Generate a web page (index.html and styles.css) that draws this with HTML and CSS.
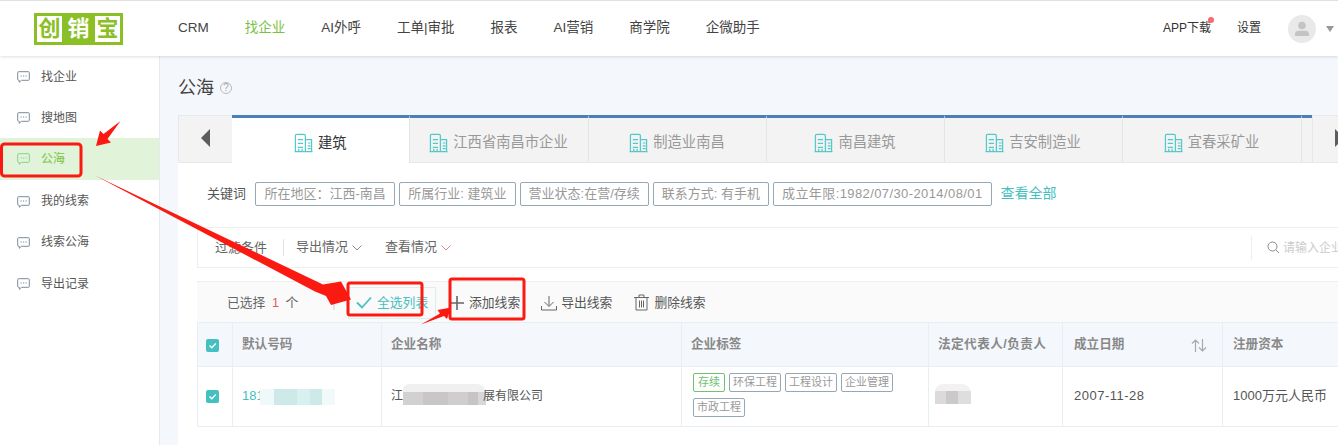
FILE: index.html
```html
<!DOCTYPE html>
<html lang="zh">
<head>
<meta charset="utf-8">
<title>公海</title>
<link rel="stylesheet" href="styles.css">
</head>
<body>
<svg class="defs" width="0" height="0">
  <symbol id="bld" viewBox="0 0 20 20"><path d="M1.500 19V2.500q0-1.500 1.500-1.500h7.500q1.500 0 1.500 1.500V19M.5 19h19M12 6.500h6.500V19M4 6.500h5.500M4 10.500h5.500M4 14.500h5.500M5 19v-3M8.500 19v-3M14.500 10h3M14.500 13h3M14.500 16h3" fill="none" stroke="#55c9c9" stroke-width="1.300"/></symbol>
  <symbol id="msg" viewBox="0 0 13 12"><path d="M1.500.7h10q.8 0 .8.8v7q0 .8-.8.8H4.500L2.300 11.300V9.300H1.500q-.8 0-.8-.8v-7q0-.8.8-.8z" fill="none" stroke="currentColor" stroke-width="1"/><path d="M3.500 5h1.200M6 5h1.200M8.500 5h1.200" stroke="currentColor" stroke-width="1.200"/></symbol>
  <symbol id="chev" viewBox="0 0 10 6"><path d="M.5.500 5 5l4.500-4.500" fill="none" stroke="currentColor" stroke-width="1"/></symbol>
  <symbol id="chk" viewBox="0 0 13 13"><rect width="13" height="13" rx="2" fill="#45c0c0"/><path d="M3.500 6.500 5.800 8.700 9.800 4.600" fill="none" stroke="#fff" stroke-width="1.400"/></symbol>
</svg>
<header class="topbar">
  <div class="logo"><span class="lg lg-w">创</span><span class="lg lg-g">销</span><span class="lg lg-w">宝</span></div>
  <nav class="nav">
    <a>CRM</a><a class="on">找企业</a><a>AI外呼</a><a>工单|审批</a><a>报表</a><a>AI营销</a><a>商学院</a><a>企微助手</a>
  </nav>
  <div class="top-right">
    <span class="app">APP下载<i class="dot"></i></span>
    <span class="set">设置</span>
    <span class="avatar"><svg width="14" height="15" viewBox="0 0 14 15"><circle cx="7" cy="4.500" r="3.800" fill="#c4c4c4"/><path d="M0 15v-2.500q0-2 3-2.800h8q3 .8 3 2.800V15z" fill="#c4c4c4"/></svg></span>
    <i class="caret"></i>
  </div>
</header>
<div class="body">
  <aside class="side">
    <a class="si"><svg class="si-ic"><use href="#msg"/></svg>找企业</a>
    <a class="si"><svg class="si-ic"><use href="#msg"/></svg>搜地图</a>
    <a class="si active"><svg class="si-ic"><use href="#msg"/></svg>公海</a>
    <a class="si low"><svg class="si-ic"><use href="#msg"/></svg>我的线索</a>
    <a class="si low"><svg class="si-ic"><use href="#msg"/></svg>线索公海</a>
    <a class="si low"><svg class="si-ic"><use href="#msg"/></svg>导出记录</a>
  </aside>
  <main class="main">
    <div class="title">公海<span class="help">?</span></div>
    <div class="tabs">
      <div class="tab-arrow left"><i class="tri-l"></i></div>
      <div class="tab active w177"><svg class="bld"><use href="#bld"/></svg>建筑</div>
      <div class="tab w179"><svg class="bld"><use href="#bld"/></svg>江西省南昌市企业</div>
      <div class="tab w178"><svg class="bld"><use href="#bld"/></svg>制造业南昌</div>
      <div class="tab w178"><svg class="bld"><use href="#bld"/></svg>南昌建筑</div>
      <div class="tab w178"><svg class="bld"><use href="#bld"/></svg>吉安制造业</div>
      <div class="tab w179"><svg class="bld"><use href="#bld"/></svg>宜春采矿业</div>
      <div class="tab w11"></div>
      <div class="tab-arrow right"><i class="tri-r"></i></div>
    </div>
    <section class="card">
      <div class="kw">
        <span class="kw-label">关键词</span>
        <span class="kw-tag">所在地区：江西-南昌</span>
        <span class="kw-tag">所属行业: 建筑业</span>
        <span class="kw-tag">营业状态:在营/存续</span>
        <span class="kw-tag">联系方式: 有手机</span>
        <span class="kw-tag ls3">成立年限:1982/07/30-2014/08/01</span>
        <a class="kw-all">查看全部</a>
      </div>
      <div class="filter">
        <span class="f-first">过滤条件</span>
        <span class="f-item">导出情况<svg class="chev"><use href="#chev"/></svg></span>
        <span class="f-item">查看情况<svg class="chev red"><use href="#chev"/></svg></span>
        <span class="search">
          <svg width="13" height="13" viewBox="0 0 13 13"><circle cx="5.500" cy="5.500" r="4.500" fill="none" stroke="#888" stroke-width="1"/><path d="M9 9l3 3" stroke="#888" stroke-width="1"/></svg>
          请输入企业名称
        </span>
      </div>
      <div class="actions">
        <span class="sel">已选择<b>1</b>个</span>
        <span class="sel-div"></span>
        <span class="all"><svg width="16" height="13" viewBox="0 0 16 13"><path d="M1 6.500 6 11.500 15 1.500" fill="none" stroke="#45c0c0" stroke-width="1.800"/></svg><u>全选列表</u></span>
        <span class="act add"><svg width="14" height="14" viewBox="0 0 14 14"><path d="M7 0v14M0 7h14" stroke="#666" stroke-width="1.600"/></svg>添加线索</span>
        <span class="act exp"><svg width="16" height="16" viewBox="0 0 16 16"><path d="M8 1v10M3.500 7 8 11.500 12.500 7M.5 11v4h15v-4" fill="none" stroke="#666" stroke-width="1"/></svg>导出线索</span>
        <span class="act del"><svg width="15" height="17" viewBox="0 0 15 17"><path d="M0 3.500h15M5 3.500V1h5v2.500M2 3.500V16h11V3.500M5.500 6.500v7M7.500 6.500v7M9.500 6.500v7" fill="none" stroke="#666" stroke-width="1"/></svg>删除线索</span>
      </div>
      <table class="grid">
        <colgroup><col class="c1"><col class="c2"><col class="c3"><col class="c4"><col class="c5"><col class="c6"><col class="c7"></colgroup>
        <thead>
          <tr>
            <th><svg class="cb"><use href="#chk"/></svg></th>
            <th>默认号码</th><th>企业名称</th><th>企业标签</th><th class="th-rep">法定代表人/负责人</th>
            <th class="col-date"><span class="th-sort">成立日期<svg width="16" height="13" viewBox="0 0 16 13"><path d="M4.500 13V1M1 4.500 4.500 1 8 4.500M11.500 0v12M8 8.500l3.500 3.500L15 8.500" fill="none" stroke="#aaa" stroke-width="1.200"/></svg></span></th>
            <th class="col-cap">注册资本</th>
          </tr>
        </thead>
        <tbody>
          <tr>
            <td><svg class="cb"><use href="#chk"/></svg></td>
            <td class="phone">181<span class="blur blur-t"></span></td>
            <td class="co">江<span class="blur blur-g"></span>展有限公司</td>
            <td class="tags-cell"><div class="tags"><span class="tg ok">存续</span><span class="tg">环保工程</span><span class="tg">工程设计</span><span class="tg">企业管理</span><span class="tg">市政工程</span></div></td>
            <td class="rep"><span class="blur blur-p"></span></td>
            <td class="col-date date">2007-11-28</td>
            <td class="col-cap">1000万元人民币</td>
          </tr>
        </tbody>
      </table>
    </section>
  </main>
</div>
<svg class="marks" width="1338" height="445" viewBox="0 0 1338 445">
  <g fill="none" stroke="#fb1a12" stroke-width="3">
    <rect x="1.500" y="144" width="79.500" height="32" rx="3"/>
    <rect x="348" y="283" width="74" height="32" rx="2"/>
    <rect x="450" y="279" width="74" height="40" rx="2"/>
  </g>
  <g fill="#fb1a12">
    <path d="M120.500 121 107.500 139 111 142.500 96 146 100 130.500 103.500 134z"/>
    <path d="M95 175.500 323 284.500 341 281.500 351 299.500 331 305 326 296 315 291.500z"/>
    <path d="M421 324.500 440 313.500 437.500 310 451 307.500 447 319 444 316z"/>
  </g>
</svg>
</body>
</html>
```
FILE: styles.css
```css
* { box-sizing: border-box; }
html, body { margin: 0; height: 445px; overflow: hidden; }
body { width: 1338px; position: relative; background: #fff; color: #555; font: 12px/1.4 "Liberation Sans", "Noto Sans CJK SC", sans-serif; }
.defs { position: absolute; }

.topbar { height: 56px; border-top: 1px solid #e1e1e1; display: flex; align-items: center; background: #fff; box-shadow: 0 1px 3px rgba(0,0,0,.13); position: relative; z-index: 2; }
.logo { width: 89px; height: 32px; margin: 0 55px 0 34px; padding: 3px 3px; background: #8abf25; display: flex; gap: 4px; flex: none; }
.lg { flex: 1; display: flex; align-items: center; justify-content: center; font-size: 22px; line-height: 26px; font-weight: 700; }
.lg-w { background: #fff; color: #8abf25; }
.lg-g { color: #fff; }
.nav { display: flex; gap: 36px; font-size: 13.500px; color: #444; }
.nav .on { color: #7ac143; }
.top-right { margin-left: auto; display: flex; align-items: center; color: #333; padding-right: 4px; }
.app { position: relative; margin-right: 26px; }
.dot { position: absolute; right: -3px; top: -3px; width: 6px; height: 6px; border-radius: 50%; background: #f46a6f; }
.set { margin-right: 27px; }
.avatar { width: 28px; height: 28px; border-radius: 50%; background: #e9e9e9; display: flex; align-items: center; justify-content: center; margin-right: 10px; }
.caret { border: 4px solid transparent; border-top: 6px solid #999; border-bottom: 0; }

.body { display: flex; height: 389px; }
.side { width: 160px; flex: none; background: #fff; border-right: 1px solid #e6e9f0; }
.si { height: 41.200px; padding-top: 1px; display: flex; align-items: center; color: #555; padding-left: 17px; }
.si.low { padding-top: 3px; }
.si-ic { width: 13px; height: 12px; margin-right: 11px; color: #7d8b99; }
.si.active { background: #e1f3d8; color: #7ac143; }
.si.active .si-ic { color: #8ccf8c; }

.main { flex: 1; min-width: 0; background: #f4f7fb; padding: 20px 0 0 18px; }
.title { height: 24px; margin-bottom: 15px; font-size: 18px; line-height: 24px; color: #444; display: flex; align-items: center; }
.help { width: 12px; height: 12px; margin-left: 6px; border: 1px solid #bbb; border-radius: 50%; color: #aaa; font-size: 10px; line-height: 10px; text-align: center; }

.tabs { display: flex; height: 48px; background: #f3f3f3; border-bottom: 1px solid #e8e8e8; font-size: 14.300px; color: #999; }
.tab-arrow { flex: none; display: flex; align-items: center; border-top: 1px solid #e8e8e8; padding-bottom: 2px; }
.tab-arrow.left { width: 54px; padding-left: 22px; border-left: 1px solid #e8e8e8; }
.tab-arrow.right { width: 60px; padding-left: 22px; border-left: 1px solid #e8e8e8; }
.tri-l { border: 9px solid transparent; border-right: 9px solid #5d5d5d; border-left: 0; }
.tri-r { border: 9px solid transparent; border-left: 9px solid #5d5d5d; border-right: 0; }
.tab { flex: none; display: flex; align-items: center; justify-content: center; gap: 5px; padding-top: 5px; border-top: 3px solid #4a7fb8; border-right: 1px solid #e4e4e4; }
.tab.active { background: #fff; color: #333; height: 48px; }
.w177 { width: 177.500px; } .w178 { width: 178px; } .w179 { width: 179px; } .w11 { width: 10.500px; border-right: 0; }
.bld { width: 19px; height: 20px; }

.card { background: #fff; padding: 19px 0 0 19px; height: 300px; width: 1200px; }
.kw { display: flex; align-items: center; gap: 4px; height: 24px; padding-left: 10px; margin-bottom: 21px; }
.kw-label { font-size: 13px; margin-right: 5px; color: #555; }
.kw-tag { height: 24px; padding: 0 8px; border: 1px solid #97a8b5; border-radius: 2px; color: #999; font-size: 13px; line-height: 21px; white-space: nowrap; }
.kw-tag:nth-child(2) { padding: 0 8.500px; }
.ls3 { letter-spacing: .4px; }
.kw-all { margin-left: 5px; color: #45c0c0; font-size: 14px; }

.filter { height: 41px; border: 1px solid #eee; display: flex; align-items: center; font-size: 13px; color: #666; margin-bottom: 13px; padding-left: 17px; white-space: nowrap; }
.f-first { flex: none; padding-right: 16px; margin-right: 12px; border-right: 1px solid #e4e4e4; line-height: 17px; }
.f-item { flex: none; margin-right: 23px; display: flex; align-items: center; gap: 4px; }
.chev { width: 10px; height: 6px; color: #888; }
.chev.red { color: #e58a8a; }
.search { margin-left: auto; width: 126px; flex: none; padding-left: 15px; border-left: 1px solid #eee; color: #ccc; display: flex; align-items: center; gap: 3px; line-height: 24px; font-size: 12px; overflow: hidden; }
.search svg { flex: none; }

.actions { height: 41px; padding-top: 1px; background: #fafafa; border-top: 1px solid #eee; display: flex; align-items: center; font-size: 12.800px; color: #555; padding-left: 30px; }
.sel { width: 106px; flex: none; color: #666; }
.sel b { font-weight: 400; color: #e55; margin: 0 6.500px; }
.sel-div { width: 2px; height: 14px; background: #e4e4e4; margin-right: 13px; flex: none; }
.all { width: 88px; height: 32px; border: 1px solid #dbeeee; display: flex; align-items: center; gap: 5px; padding-left: 7px; color: #45c0c0; margin-right: 14px; flex: none; }
.all u { text-decoration: none; }
.act { display: flex; align-items: center; gap: 5px; flex: none; }
.act.add { margin-right: 21px; }
.act.exp { margin-right: 22px; gap: 4px; }

.grid { table-layout: fixed; border-collapse: collapse; width: 1240px; font-size: 13px; }
.c1 { width: 35px; } .c2 { width: 149px; } .c3 { width: 300px; } .c4 { width: 247px; } .c5 { width: 134px; } .c6 { width: 160px; } .c7 { width: 215px; }
.grid th, .grid td { border: 1px solid #e9edf4; text-align: left; padding: 0 9px; }
.grid th { height: 44px; padding-top: 1px; background: #f4f7fb; color: #888; font-weight: 700; font-size: 12.600px; white-space: nowrap; }
.grid td { height: 60px; color: #555; white-space: nowrap; }
.grid th:first-child, .grid td:first-child { padding-left: 8px; }
.grid th.th-rep { letter-spacing: .45px; }
.grid .col-date { padding-left: 11px; }
.grid .col-cap { padding-left: 10px; }
.cb { width: 13px; height: 13px; display: block; }
.th-sort { display: flex; justify-content: space-between; align-items: center; padding-right: 6px; }
.grid td.phone { color: #45c0c0; }
.grid td.co { font-size: 12px; }
.grid td.date { letter-spacing: .5px; }
.blur { display: inline-block; vertical-align: middle; }
.blur-t { width: 75px; height: 16px; margin-left: -4px; background: linear-gradient(90deg, #f0f9f9 0 14px, #cdeae8 14px 37px, #d8f0ee 37px 50px, #cdeae8 50px 62px, #f1faf9 62px); }
.blur-g { width: 83px; height: 21px; margin: 0 -3px 5px 0; border-radius: 6px 9px 0 0; background: linear-gradient(#f1f0f0 0 8px, transparent 8px), linear-gradient(90deg, #d2d0d0 0 20px, #c8c6c6 20px 45px, #cfcdcd 45px 65px, #c6c4c4 65px 75px, #d8d6d6 75px); }
.blur-p { width: 36px; height: 20px; margin-bottom: 5px; border-radius: 8px 9px 0 0; background: linear-gradient(#f3f2f2 0 7px, transparent 7px), linear-gradient(90deg, #dcdada 0 11px, #cbc9c9 11px 23px, #dfdede 23px); }
.tags-cell { padding-left: 11px !important; }
.tags { display: flex; flex-wrap: wrap; gap: 6px 4px; width: 215px; margin-bottom: 3px; }
.tg { height: 19px; width: 52px; border: 1px solid #97a8b5; border-radius: 2px; font-size: 11px; line-height: 17px; text-align: center; color: #999; }
.tg.ok { width: 32px; border-color: #6fc36f; color: #6fc36f; }
.rep { padding-left: 6px !important; }

.marks { position: absolute; left: 0; top: 0; z-index: 5; pointer-events: none; }
```
